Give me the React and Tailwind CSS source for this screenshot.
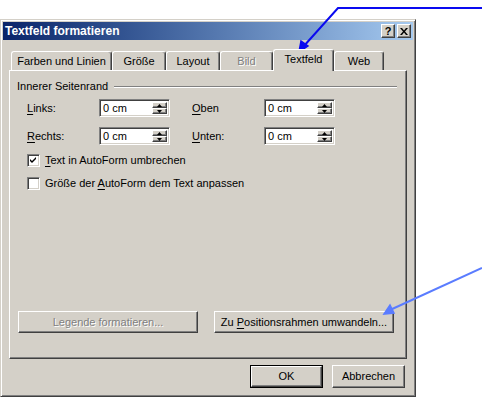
import React from "react";

const raised =
  "border border-t-white border-l-white border-r-[#404040] border-b-[#404040] shadow-[inset_-1px_-1px_#808080] bg-[#d4d0c8]";
const sunken =
  "border border-t-[#808080] border-l-[#808080] border-r-white border-b-white shadow-[inset_1px_1px_#404040,inset_-1px_-1px_#d4d0c8]";

function U({ children }) {
  return <span className="underline underline-offset-[2px]">{children}</span>;
}

function Tab({ children, w, active, disabled }) {
  if (active) {
    return (
      <div
        className={`relative z-10 -mb-[1px] h-[22px] ${w} flex items-center justify-center rounded-t-[3px] border border-b-0 border-t-white border-l-white border-r-[#404040] shadow-[inset_-1px_0_#808080] bg-[#d4d0c8] pb-[2px]`}
      >
        {children}
      </div>
    );
  }
  return (
    <div
      className={`h-[19px] ${w} flex items-center justify-center rounded-t-[3px] border border-b-0 border-t-white border-l-white border-r-[#404040] shadow-[inset_-1px_0_#808080] ${
        disabled ? "text-[#808080] [text-shadow:1px_1px_#fff]" : ""
      }`}
    >
      {children}
    </div>
  );
}

function Spinner() {
  return (
    <div className={`w-[71px] h-[18px] ${sunken} bg-white flex items-stretch p-[2px]`}>
      <div className="flex-1 flex items-center pl-[1px] leading-none">0 cm</div>
      <div className="w-[15px] flex flex-col">
        <div className={`h-[7px] ${raised} flex items-center justify-center`}>
          <svg width="5" height="3" viewBox="0 0 5 3">
            <path d="M2.5 0 L5 3 L0 3 Z" fill="#000" />
          </svg>
        </div>
        <div className={`h-[7px] ${raised} flex items-center justify-center`}>
          <svg width="5" height="3" viewBox="0 0 5 3">
            <path d="M0 0 L5 0 L2.5 3 Z" fill="#000" />
          </svg>
        </div>
      </div>
    </div>
  );
}

function Checkbox({ checked }) {
  return (
    <div className={`w-[13px] h-[13px] ${sunken} bg-white flex items-center justify-center`}>
      {checked && (
        <svg width="7" height="7" viewBox="0 0 7 7">
          <path d="M0 2 L2 4 L6 0 L6 2 L2 6 L0 4 Z" fill="#000" />
        </svg>
      )}
    </div>
  );
}

export default function App() {
  return (
    <div className="relative w-[482px] h-[397px] bg-white overflow-hidden font-['Liberation_Sans',Arial,sans-serif] text-[11px] text-black">
      {/* dialog */}
      <div className="mt-[19px] w-[416px] h-[378px] bg-[#d4d0c8] border border-t-[#d4d0c8] border-l-[#d4d0c8] border-r-[#404040] border-b-[#404040] shadow-[inset_1px_1px_#fff,inset_-1px_-1px_#808080] p-[2px] flex flex-col">
        {/* title bar */}
        <div className="h-[18px] flex items-center justify-between bg-gradient-to-r from-[#0a246a] to-[#a6caf0] pl-[2px] pr-[2px]">
          <span className="text-white font-bold text-[12px] leading-none">Textfeld formatieren</span>
          <div className="flex gap-[2px]">
            <div className={`w-[14px] h-[14px] ${raised} flex items-center justify-center font-bold text-[11px] leading-none`}>
              ?
            </div>
            <div className={`w-[14px] h-[14px] ${raised} flex items-center justify-center`}>
              <svg width="8" height="7" viewBox="0 0 8 7">
                <path d="M0 0 L2 0 L4 2.5 L6 0 L8 0 L5 3.5 L8 7 L6 7 L4 4.5 L2 7 L0 7 L3 3.5 Z" fill="#000" />
              </svg>
            </div>
          </div>
        </div>

        {/* body */}
        <div className="pl-[6px] pt-[8px] flex flex-col">
          {/* tabs */}
          <div className="flex items-end h-[22px] pl-[2px]">
            <Tab w="w-[101px]">Farben und Linien</Tab>
            <Tab w="w-[54px]">Größe</Tab>
            <Tab w="w-[54px]">Layout</Tab>
            <Tab w="w-[53px]" disabled>Bild</Tab>
            <Tab w="w-[61px]" active>Textfeld</Tab>
            <Tab w="w-[50px]">Web</Tab>
          </div>

          {/* panel */}
          <div className="w-[398px] h-[289px] border border-t-white border-l-white border-r-[#404040] border-b-[#404040] shadow-[inset_-1px_-1px_#808080] flex flex-col pl-[7px]">
            <div className="flex items-center mt-[9px] h-[13px]">
              <span className="leading-none">Innerer Seitenrand</span>
              <div className="ml-[6px] flex-1 mr-[9px] h-[2px] border-t border-t-[#808080] border-b border-b-white" />
            </div>

            <div className="flex items-center mt-[6px] h-[18px]">
              <span className="w-[82px] pl-[10px]"><U>L</U>inks:</span>
              <Spinner />
              <span className="w-[94px] pl-[22px]"><U>O</U>ben</span>
              <Spinner />
            </div>
            <div className="flex items-center mt-[10px] h-[18px]">
              <span className="w-[82px] pl-[10px]"><U>R</U>echts:</span>
              <Spinner />
              <span className="w-[94px] pl-[22px]"><U>U</U>nten:</span>
              <Spinner />
            </div>

            <div className="flex items-center mt-[9px] h-[13px] pl-[10px] gap-[5px]">
              <Checkbox checked />
              <span><U>T</U>ext in AutoForm umbrechen</span>
            </div>
            <div className="flex items-center mt-[10px] h-[13px] pl-[10px] gap-[5px]">
              <Checkbox />
              <span>Größe der <U>A</U>utoForm dem Text anpassen</span>
            </div>

            <div className="flex items-center mt-[121px] gap-[16px] pl-[1px]">
              <div className={`w-[180px] h-[22px] ${raised} flex items-center justify-center text-[#808080] [text-shadow:1px_1px_#fff]`}>
                Legende formatieren...
              </div>
              <div className={`w-[180px] h-[22px] ${raised} flex items-center justify-center`}>
                <span>Zu <U>P</U>ositionsrahmen umwandeln...</span>
              </div>
            </div>
          </div>

          {/* bottom buttons */}
          <div className="flex justify-end gap-[9px] mt-[6px] pr-[8px]">
            <div className="w-[73px] h-[23px] border border-black">
              <div className={`w-full h-full ${raised} flex items-center justify-center`}>OK</div>
            </div>
            <div className={`w-[73px] h-[23px] ${raised} flex items-center justify-center`}>Abbrechen</div>
          </div>
        </div>
      </div>

      {/* annotation arrows */}
      <svg className="absolute left-0 top-0 pointer-events-none" width="482" height="397" viewBox="0 0 482 397">
        <polyline points="482,8 338,8 303,47" fill="none" stroke="#0a0af0" strokeWidth="2" />
        <path d="M299 52 L301 41 L308 46 Z" fill="#0a0af0" stroke="#0a0af0" strokeWidth="1.5" />
        <line x1="482" y1="268" x2="390" y2="310" stroke="#5a7cff" strokeWidth="2" />
        <path d="M384 314 L390 305 L394 313 Z" fill="#5a7cff" stroke="#5a7cff" strokeWidth="1.5" />
      </svg>
    </div>
  );
}
